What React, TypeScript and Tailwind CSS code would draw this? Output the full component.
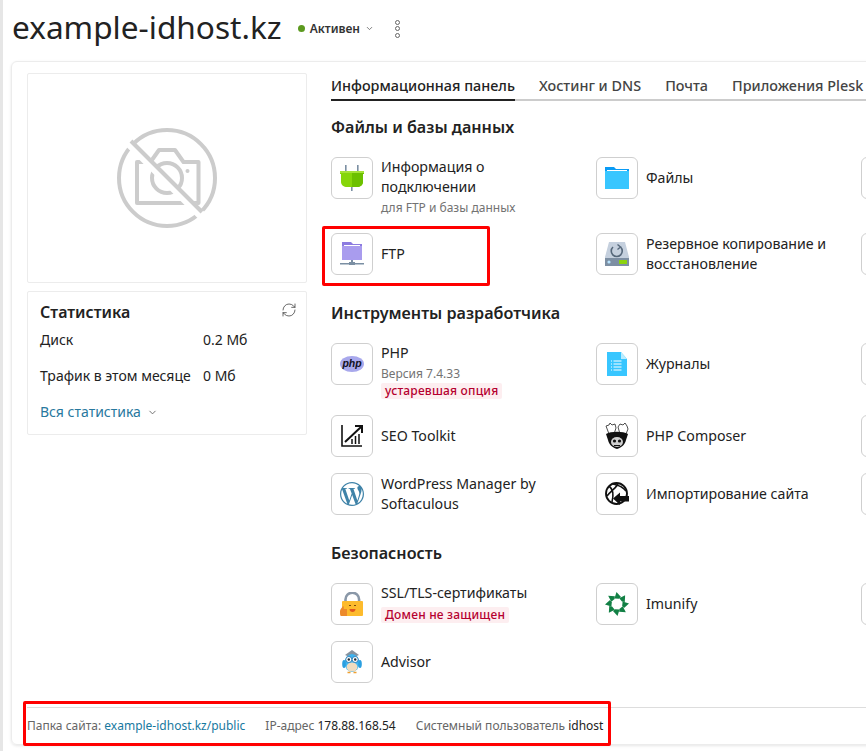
import type { ReactNode } from 'react';
import { ChevronDown, RefreshCw } from 'lucide-react';
import { SiWordpress } from 'react-icons/si';

const PlugIcon = () => (
  <svg width="24" height="26" viewBox="0 0 24 26">
    <rect x="5" y="0" width="1.6" height="6" fill="#7b8fa3" />
    <rect x="17" y="0" width="1.6" height="6" fill="#7b8fa3" />
    <rect x="11" y="21" width="1.6" height="5" fill="#7b8fa3" />
    <path d="M0 6h24v3h-1v8c0 3-3 5-6 5H7c-3 0-6-2-6-5V9H0z" fill="#86d60a" />
    <path d="M12 6h12v3h-1v8c0 3-3 5-6 5h-5z" fill="#6cc000" />
    <rect x="0" y="6" width="24" height="2" fill="#a6e23a" />
  </svg>
);

const BlueFolder = () => (
  <svg width="24" height="24" viewBox="0 0 24 24">
    <path d="M0 1h9l2 2h13v20H0z" fill="#0a9bf5" />
    <rect x="0" y="5" width="24" height="18" fill="#38c6ff" />
    <rect x="2" y="4" width="20" height="1" fill="#fff" />
  </svg>
);

const FtpIcon = () => (
  <svg width="24" height="24" viewBox="0 0 24 24">
    <path d="M2 0h9l2 2h9v16H2z" fill="#8c7be0" />
    <rect x="2" y="4" width="20" height="14" fill="#a99cee" />
    <rect x="4" y="3" width="16" height="1" fill="#fff" />
    <rect x="11" y="18" width="2" height="4" fill="#7b8fa3" />
    <rect x="0" y="21" width="24" height="1.5" fill="#7b8fa3" />
    <rect x="9" y="20" width="6" height="3" fill="#7b8fa3" />
  </svg>
);

const BackupIcon = () => (
  <svg width="24" height="24" viewBox="0 0 24 24">
    <path d="M4 0h16l4 15v9H0v-9z" fill="#c5d0de" />
    <rect x="0" y="16" width="24" height="8" fill="#7d8fa3" />
    <circle cx="4" cy="20" r="1.6" fill="#b8e4ff" />
    <rect x="14" y="18" width="8" height="4" fill="#8bd30f" />
    <path d="M8 5a5.5 5.5 0 1 0 7.5 0" fill="none" stroke="#55677a" strokeWidth="1.6" />
    <path d="M12.5 2.5l3 2.5-3 2.5" fill="none" stroke="#55677a" strokeWidth="1.4" />
  </svg>
);

const PhpIcon = () => (
  <svg width="24" height="24" viewBox="0 0 24 24">
    <ellipse cx="12" cy="12" rx="12" ry="8" fill="#a8a8ec" />
    <text x="12" y="15" textAnchor="middle" fontSize="10.5" fontWeight="700" fontStyle="italic" fontFamily="'Liberation Sans', sans-serif" fill="#111122">php</text>
  </svg>
);

const LogIcon = () => (
  <svg width="24" height="24" viewBox="0 0 24 24">
    <path d="M2 0h14l6 7v17H2z" fill="#38c6ff" />
    <path d="M16 0l6 7h-6z" fill="#b9ecff" />
    <path d="M8.5 9h8M8.5 12h8M8.5 15h8M8.5 18h8" stroke="#fff" strokeWidth="1" />
    <path d="M6 9h1M6 12h1M6 15h1M6 18h1" stroke="#fff" strokeWidth="1" />
  </svg>
);

const SeoIcon = () => (
  <svg width="24" height="24" viewBox="0 0 24 24" fill="none" stroke="#111">
    <path d="M2 1v21h20" strokeWidth="1.6" />
    <path d="M5 18L21 3" strokeWidth="2" />
    <path d="M15 2h7v7" strokeWidth="2" />
    <path d="M12 20v-5M15.5 20v-8M19 20v-10" strokeWidth="1.5" />
  </svg>
);

const ComposerIcon = () => (
  <svg width="24" height="26" viewBox="0 0 24 26">
    <path d="M1 3l3-1 1-2 2 2 3-1 1 4-2 6H4z" fill="#fff" stroke="#222" strokeWidth="0.8" />
    <path d="M13 4l2-3 3 1 2-2 2 3 1 3-2 5h-6z" fill="#fff" stroke="#222" strokeWidth="0.8" />
    <path d="M1 11c5-3 17-3 22 0l-2 6c-1 4-3 7-9 9-6-2-8-5-9-9z" fill="#111" />
    <ellipse cx="12" cy="19" rx="6" ry="5" fill="#cfcfcf" />
    <circle cx="9.5" cy="18" r="1.6" fill="#111" />
    <circle cx="14.5" cy="18" r="1.6" fill="#111" />
    <path d="M9 22.5h6" stroke="#111" strokeWidth="1" />
  </svg>
);

const ImportIcon = () => (
  <svg width="24" height="24" viewBox="0 0 24 24" fill="none" stroke="#111">
    <circle cx="11.5" cy="11.5" r="10.5" strokeWidth="1.9" />
    <path d="M4 4c4 3 5 8 3 16M8 2c5 1 10 3 13 7M2 14c3-4 8-7 11-12" strokeWidth="1.6" />
    <path d="M8 16.5l7-6v3.5h9v5.5h-9v3.5z" fill="#111" stroke="none" />
  </svg>
);

const LockIcon = () => (
  <svg width="24" height="24" viewBox="0 0 24 24">
    <path d="M5.5 10V7.5a6.8 6.8 0 0 1 13.6 0V10" fill="none" stroke="#8a98a8" strokeWidth="2.6" />
    <rect x="2" y="9" width="21" height="15" rx="1" fill="#fdbb2d" />
    <path d="M9 13.5h2M14 13.5h2" stroke="#7a4a10" strokeWidth="1" />
    <path d="M9.5 17h6c0 2-1.4 3-3 3s-3-1-3-3z" fill="#e2571e" />
    <path d="M0 19c0-2 2-3 3-5 1 0 1 2 .8 3H7v7H1c-1 0-1-3-1-5z" fill="#ec8a2c" />
  </svg>
);

const ImunifyIcon = () => (
  <svg width="24" height="24" viewBox="0 0 24 24">
    {[0, 45, 90, 135, 180, 225, 270, 315].map((deg) => (
      <polygon key={deg} points="11.5,0 16,5 13.8,6.8 9.5,6.4" fill="#128045" transform={`rotate(${deg} 12 12)`} />
    ))}
  </svg>
);

const OwlIcon = () => (
  <svg width="20" height="24" viewBox="0 0 20 24">
    <path d="M3 5l7-5 7 5-7 3z" fill="#8793a0" />
    <ellipse cx="10" cy="13" rx="7.5" ry="9" fill="#3db5f2" />
    <ellipse cx="2" cy="14" rx="1.8" ry="4" fill="#2a9fe0" />
    <ellipse cx="18" cy="14" rx="1.8" ry="4" fill="#2a9fe0" />
    <ellipse cx="10" cy="17" rx="5.5" ry="4.5" fill="#f0dcc0" />
    <circle cx="6.8" cy="9.5" r="3" fill="#fff" stroke="#1b6fa8" strokeWidth="0.8" />
    <circle cx="13.2" cy="9.5" r="3" fill="#fff" stroke="#1b6fa8" strokeWidth="0.8" />
    <circle cx="6.8" cy="9.5" r="1.2" fill="#1d2a36" />
    <circle cx="13.2" cy="9.5" r="1.2" fill="#1d2a36" />
    <path d="M5.5 22.5h3M11.5 22.5h3" stroke="#f0a030" strokeWidth="1.6" />
  </svg>
);

// circle with a camera behind a crossed-out diagonal
const NoPhoto = () => (
  <svg width="100" height="100" viewBox="0 0 100 100" fill="none" stroke="#cccccc" strokeWidth="4">
    <circle cx="50" cy="50" r="48" />
    <path d="M20 34v41h61.5V34H66.5L58 22H42l-8.5 12z" strokeLinejoin="round" />
    <circle cx="50" cy="50" r="15" />
    <circle cx="70.5" cy="43" r="2" fill="#cccccc" stroke="none" />
    <path d="M5 8L92 95" stroke="#ffffff" strokeWidth="9" />
    <path d="M14 13L85 84" strokeWidth="4" />
  </svg>
);

function Tool({ icon, children, sub }: { icon?: ReactNode; children?: ReactNode; sub?: ReactNode }) {
  return (
    <div className="flex gap-2 min-h-[42px]">
      <div className="w-[42px] h-[42px] shrink-0 rounded-[6px] border border-[#cfcfcf] bg-white flex items-center justify-center">
        {icon}
      </div>
      <div className={sub ? '' : 'flex items-center h-[42px]'}>
        <div className="text-[14.2px] leading-[20px] text-[#222222] whitespace-nowrap">{children}</div>
        {sub}
      </div>
    </div>
  );
}

const Badge = ({ children }: { children: ReactNode }) => (
  <span className="block w-fit px-1 bg-[#fdeef0] rounded-[2px] text-[12px] leading-[16px] font-medium tracking-[0.2px] text-[#b5002f]">
    {children}
  </span>
);

const Sub = ({ children }: { children: ReactNode }) => (
  <div className="text-[12px] leading-[18px] mt-[2px] text-[#737373]">{children}</div>
);

const Heading = ({ children }: { children: ReactNode }) => (
  <h2 className="text-[16.15px] leading-[24px] font-semibold text-[#222222]">{children}</h2>
);

const TAB_NAMES = ['Хостинг и DNS', 'Почта', 'Приложения Plesk'];

export default function App() {
  return (
    <div className="relative w-[866px] h-[751px] overflow-hidden bg-white border-l-[3px] border-[#e6e6e6] font-['Noto_Sans',sans-serif]">
      {/* Title row */}
      <header className="flex items-center h-[61px] pl-[9px] pb-[8px]">
        <h1 className="text-[31.6px] leading-[40px] text-[#222222]">example-idhost.kz</h1>
        <div className="flex items-center ml-4 mt-[4px] text-[12px] font-semibold text-[#333333]">
          <span className="w-[7px] h-[7px] rounded-full bg-[#5c9a1f] mr-[5px]" />
          Активен
          <ChevronDown size={9} className="ml-[5px] text-[#555555]" />
        </div>
        <div className="flex flex-col gap-[1.5px] ml-[21px] mt-[4px]">
          <span className="w-[5px] h-[5px] rounded-full border border-[#666666]" />
          <span className="w-[5px] h-[5px] rounded-full border border-[#666666]" />
          <span className="w-[5px] h-[5px] rounded-full border border-[#666666]" />
        </div>
      </header>

      {/* Main card */}
      <div className="ml-2 w-[900px] h-[684px] rounded-[6px] border border-[#ececec] shadow-[0_1px_3px_rgba(0,0,0,0.1)] flex flex-col">
        <div className="flex-1 flex pl-[15px] pt-[11px] gap-6">
          <aside className="w-[280px] shrink-0 flex flex-col gap-2">
            <div className="h-[210px] border border-[#ececec] rounded-[2px] flex items-center justify-center">
              <NoPhoto />
            </div>
            <div className="h-[144px] border border-[#ececec] rounded-[2px] px-3 pt-2 relative">
              <div className="text-[16px] leading-[24px] font-semibold text-[#222222]">Статистика</div>
              <RefreshCw size={16} strokeWidth={1.2} className="absolute right-[9px] top-[10px] text-[#444444]" />
              <div className="text-[14px] leading-[20px] text-[#222222] mt-[6px]">
                <div className="flex h-[36px]">
                  <span className="w-[163px]">Диск</span>
                  <span>0.2 Мб</span>
                </div>
                <div className="flex h-[36px]">
                  <span className="w-[163px] whitespace-nowrap">Трафик в этом месяце</span>
                  <span>0 Мб</span>
                </div>
                <div className="flex items-center text-[#28789e]">
                  Вся статистика
                  <ChevronDown size={11} className="ml-[6px] text-[#666666]" />
                </div>
              </div>
            </div>
          </aside>

          <main className="flex-1 min-w-0 pt-[1px]">
            <nav className="flex gap-[24px] border-b-2 border-[#cccccc] h-[27px] text-[14.4px] font-medium leading-[24px] text-[#444444] whitespace-nowrap">
              <span className="h-[27px] border-b-2 border-[#222222] text-[#222222]">Информационная панель</span>
              {TAB_NAMES.map((name) => (
                <span key={name}>{name}</span>
              ))}
            </nav>

            <div className="mt-[14px]">
              <Heading>Файлы и базы данных</Heading>
            </div>
            <div className="grid grid-cols-[265px_265px_265px] gap-y-4 mt-[18px]">
              <Tool
                icon={<PlugIcon />}
                sub={<div className="mt-[2px]"><Sub>для FTP и базы данных</Sub></div>}
              >
                Информация о<br />подключении
              </Tool>
              <Tool icon={<BlueFolder />}>Файлы</Tool>
              <Tool />
              <Tool icon={<FtpIcon />}>FTP</Tool>
              <Tool icon={<BackupIcon />}>
                Резервное копирование и<br />восстановление
              </Tool>
              <Tool />
            </div>

            <div className="mt-[26px]">
              <Heading>Инструменты разработчика</Heading>
            </div>
            <div className="grid grid-cols-[265px_265px_265px] gap-y-4 mt-[18px]">
              <Tool
                icon={<PhpIcon />}
                sub={
                  <>
                    <Sub>Версия 7.4.33</Sub>
                    <Badge>устаревшая опция</Badge>
                  </>
                }
              >
                PHP
              </Tool>
              <Tool icon={<LogIcon />}>Журналы</Tool>
              <Tool />
              <Tool icon={<SeoIcon />}>SEO Toolkit</Tool>
              <Tool icon={<ComposerIcon />}>PHP Composer</Tool>
              <Tool />
              <Tool icon={<SiWordpress size={24} color="#3f83a8" />}>
                WordPress Manager by
                <br />
                Softaculous
              </Tool>
              <Tool icon={<ImportIcon />}>Импортирование сайта</Tool>
              <Tool />
            </div>

            <div className="mt-[26px]">
              <Heading>Безопасность</Heading>
            </div>
            <div className="grid grid-cols-[265px_265px_265px] gap-y-4 mt-[18px]">
              <Tool
                icon={<LockIcon />}
                sub={
                  <div className="mt-[4px]">
                    <Badge>Домен не защищен</Badge>
                  </div>
                }
              >
                SSL/TLS-сертификаты
              </Tool>
              <Tool icon={<ImunifyIcon />}>Imunify</Tool>
              <Tool />
              <Tool icon={<OwlIcon />}>Advisor</Tool>
            </div>
          </main>
        </div>

        {/* Footer */}
        <footer className="mx-[15px] border-t border-[#dddddd] h-[37px] flex items-center gap-5 text-[12px] text-[#666666]">
          <span>
            Папка сайта: <span className="text-[#17799f]">example-idhost.kz/public</span>
          </span>
          <span>
            IP-адрес <span className="text-[#222222]">178.88.168.54</span>
          </span>
          <span>
            Системный пользователь <span className="text-[#222222]">idhost</span>
          </span>
        </footer>
      </div>

      {/* Red annotation frames */}
      <div className="absolute left-[319px] top-[226px] w-[168px] h-[60px] border-[3px] border-[#ff0000] rounded-[2px]" />
      <div className="absolute left-[20px] top-[701px] w-[588px] h-[45px] border-[3px] border-[#ff0000] rounded-[2px]" />
    </div>
  );
}
